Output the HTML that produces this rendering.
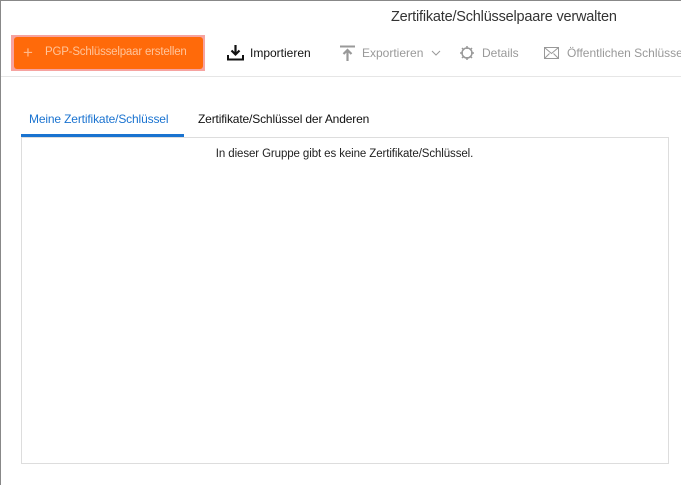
<!DOCTYPE html>
<html><head><style>
body{margin:0;width:681px;height:485px;background:#fff;font-family:"Liberation Sans",sans-serif;position:relative;overflow:hidden}
.a{position:absolute;white-space:nowrap}
</style></head><body>
<div class="a" style="left:0;top:0;width:681px;height:1px;background:#888"></div>
<div class="a" style="left:0;top:0;width:1px;height:485px;background:#888"></div>
<div class="a" style="left:391px;top:9px;font-size:14.5px;color:#333;letter-spacing:-0.2px">Zertifikate/Schlüsselpaare verwalten</div>
<div class="a" style="left:11px;top:35px;width:194px;height:36px;background:#f6a3a0"></div>
<div class="a" style="left:14px;top:37px;width:189px;height:32px;background:#ff6a0a;border-radius:3px"></div>
<div class="a" style="left:23px;top:44px;font-size:17px;color:#ffb98a;line-height:17px">+</div>
<div class="a" style="left:45px;top:46px;font-size:11.5px;color:#ffc49a;letter-spacing:-0.2px">PGP-Schlüsselpaar erstellen</div>
<svg class="a" style="left:227px;top:44px" width="17" height="17" viewBox="0 0 17 17"><path d="M8.5 1v9M4.5 6.5l4 4 4-4" stroke="#111" stroke-width="2.2" fill="none"/><path d="M1 11v4.5h15V11" stroke="#111" stroke-width="2" fill="none"/></svg>
<div class="a" style="left:250px;top:46px;font-size:12px;color:#111">Importieren</div>
<svg class="a" style="left:339px;top:45px" width="17" height="17" viewBox="0 0 17 17"><path d="M1 1.5h15" stroke="#999" stroke-width="2"/><path d="M8.5 16V5M4.5 9l4-4 4 4" stroke="#999" stroke-width="2.2" fill="none"/></svg>
<div class="a" style="left:362px;top:46px;font-size:12px;color:#999">Exportieren</div>
<svg class="a" style="left:431px;top:50px" width="10" height="6"><path d="M1 1l4 4 4-4" stroke="#999" fill="none"/></svg>
<svg class="a" style="left:459px;top:45px" width="16" height="16" viewBox="0 0 16 16"><circle cx="8" cy="8" r="5" stroke="#999" stroke-width="1.5" fill="none"/><path d="M8 1v3M8 12v3M1 8h3M12 8h3M3 3l2 2M11 11l2 2M3 13l2-2M11 5l2-2" stroke="#999" stroke-width="1.5"/></svg>
<div class="a" style="left:482px;top:46px;font-size:12px;color:#999">Details</div>
<svg class="a" style="left:544px;top:47px" width="15" height="12" viewBox="0 0 15 12"><rect x=".5" y=".5" width="14" height="11" stroke="#999" fill="none"/><path d="M.5 .5l7 6 7-6M.5 11.5l5-5M14.5 11.5l-5-5" stroke="#999" fill="none"/></svg>
<div class="a" style="left:567px;top:46px;font-size:12px;color:#999">Öffentlichen Schlüssel</div>
<div class="a" style="left:1px;top:76px;width:680px;height:1px;background:#e6e6e6"></div>
<div class="a" style="left:29px;top:112px;font-size:12px;color:#1a73d0;letter-spacing:-0.15px">Meine Zertifikate/Schlüssel</div>
<div class="a" style="left:21px;top:134px;width:163px;height:3px;background:#1a73d0"></div>
<div class="a" style="left:198px;top:112px;font-size:12px;color:#111;letter-spacing:-0.15px">Zertifikate/Schlüssel der Anderen</div>
<div class="a" style="left:21px;top:137px;width:646px;height:325px;border:1px solid #ddd"></div>
<div class="a" style="left:0;width:689px;text-align:center;top:148px;font-size:11.5px;color:#222;letter-spacing:-0.1px">In dieser Gruppe gibt es keine Zertifikate/Schlüssel.</div>
</body></html>
